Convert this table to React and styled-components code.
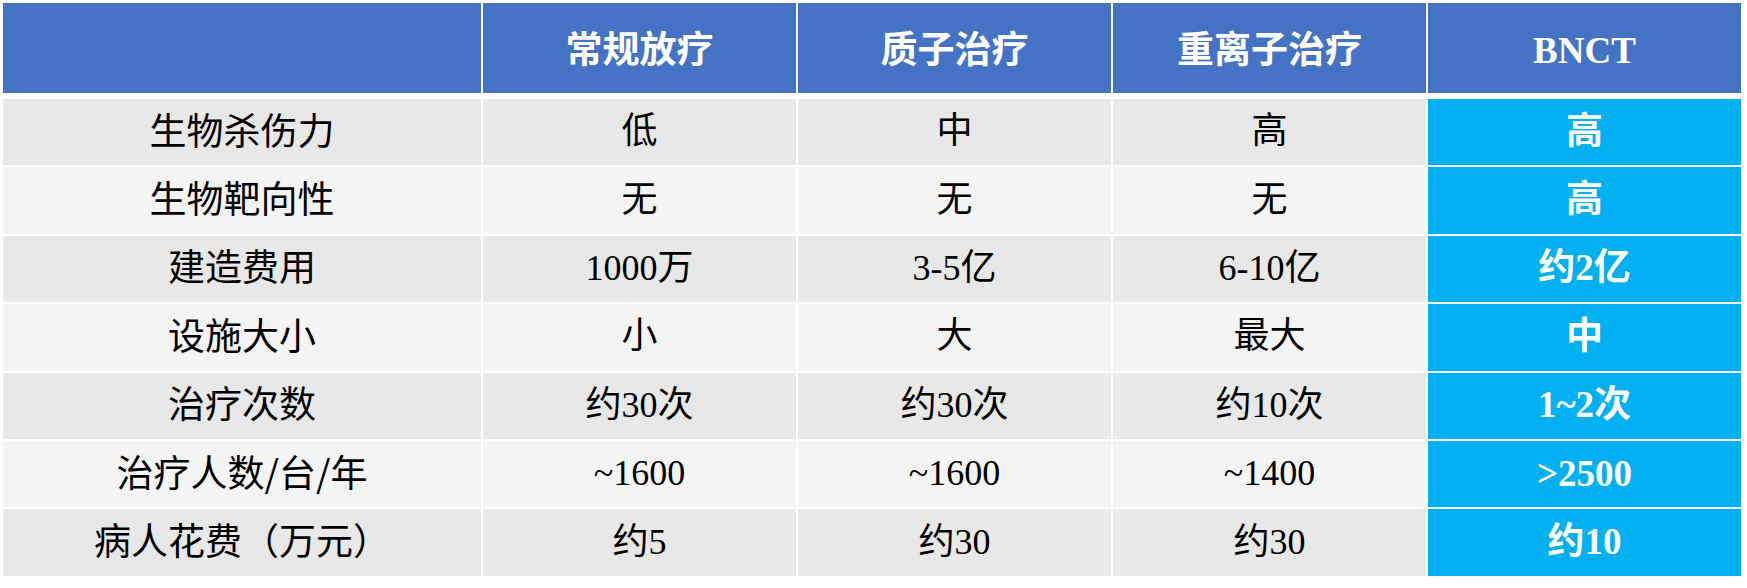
import React from "react";
import styled, { createGlobalStyle, css } from "styled-components";

const GlobalStyle = createGlobalStyle`
  html, body {
    margin: 0;
    padding: 0;
    background: #ffffff;
  }
  body {
    padding: 3px;
    font-family: "Noto Sans CJK SC", sans-serif;
  }
`;

const MIXED = `"Liberation Serif", "Noto Sans CJK SC", serif`;
const SANS = `"Noto Sans CJK SC", "Noto Sans", sans-serif`;

const Table = styled.div`
  display: flex;
  flex-direction: column;
  gap: 6px;
  width: 1738px;
`;

const Grid = styled.div`
  display: grid;
  grid-template-columns: 478px repeat(4, 313px);
  column-gap: 2px;
  row-gap: 2px;
  grid-auto-rows: ${(p) => p.$rowHeight};
`;

const Cell = styled.div`
  display: flex;
  align-items: center;
  justify-content: center;
  box-sizing: border-box;
  white-space: nowrap;
  line-height: 1;
  font-size: 36px;
  padding-bottom: 2px;
  color: #000000;
  font-family: ${MIXED};
  background: ${(p) => (p.$even ? "#f4f4f4" : "#e8e8e8")};

  ${(p) =>
    p.$kind === "head" &&
    css`
      background: #4472c4;
      color: #ffffff;
      font-weight: 700;
      font-size: 37px;
      padding-bottom: 0;
      padding-top: 4px;
    `}

  ${(p) =>
    p.$kind === "label" &&
    css`
      font-family: ${SANS};
      font-size: 37px;
      padding-bottom: 6px;
    `}

  ${(p) =>
    p.$kind === "hot" &&
    css`
      background: #00b0f0;
      color: #ffffff;
      font-weight: 700;
      font-size: 37px;
    `}
`;

const headers = ["", "常规放疗", "质子治疗", "重离子治疗", "BNCT"];

const rows = [
  ["生物杀伤力", "低", "中", "高", "高"],
  ["生物靶向性", "无", "无", "无", "高"],
  ["建造费用", "1000万", "3-5亿", "6-10亿", "约2亿"],
  ["设施大小", "小", "大", "最大", "中"],
  ["治疗次数", "约30次", "约30次", "约10次", "1~2次"],
  ["治疗人数/台/年", "~1600", "~1600", "~1400", ">2500"],
  ["病人花费（万元）", "约5", "约30", "约30", "约10"],
];

export default function App() {
  return (
    <>
      <GlobalStyle />
      <Table>
        <Grid $rowHeight="90px">
          {headers.map((h, i) => (
            <Cell key={i} $kind="head">
              {h}
            </Cell>
          ))}
        </Grid>
        <Grid $rowHeight="66.4px">
          {rows.map((row, r) =>
            row.map((value, c) => (
              <Cell
                key={`${r}-${c}`}
                $even={r % 2 === 1}
                $kind={c === 0 ? "label" : c === 4 ? "hot" : "data"}
              >
                {value}
              </Cell>
            ))
          )}
        </Grid>
      </Table>
    </>
  );
}
